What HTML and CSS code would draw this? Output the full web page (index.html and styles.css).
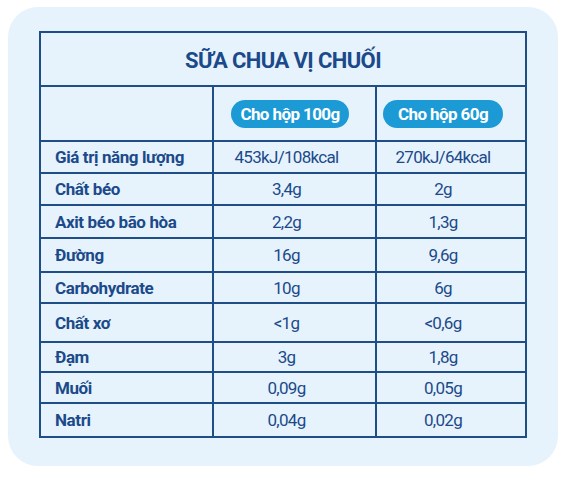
FILE: index.html
```html
<!DOCTYPE html>
<html lang="vi">
<head>
<meta charset="utf-8">
<title>Sữa chua vị chuối</title>
<link rel="stylesheet" href="styles.css">
</head>
<body>
<div class="panel">
  <div class="table">
    <div class="cell title">SỮA CHUA VỊ CHUỐI</div>
    <div class="cell"></div>
    <div class="cell head c2"><span class="pill">Cho hộp 100g</span></div>
    <div class="cell head c3"><span class="pill">Cho hộp 60g</span></div>

    <div class="cell label">Giá trị năng lượng</div>
    <div class="cell val c2">453kJ/108kcal</div>
    <div class="cell val c3">270kJ/64kcal</div>

    <div class="cell label">Chất béo</div>
    <div class="cell val c2">3,4g</div>
    <div class="cell val c3">2g</div>

    <div class="cell label">Axit béo bão hòa</div>
    <div class="cell val c2">2,2g</div>
    <div class="cell val c3">1,3g</div>

    <div class="cell label">Đường</div>
    <div class="cell val c2">16g</div>
    <div class="cell val c3">9,6g</div>

    <div class="cell label">Carbohydrate</div>
    <div class="cell val c2">10g</div>
    <div class="cell val c3">6g</div>

    <div class="cell label">Chất xơ</div>
    <div class="cell val c2">&lt;1g</div>
    <div class="cell val c3">&lt;0,6g</div>

    <div class="cell label">Đạm</div>
    <div class="cell val c2">3g</div>
    <div class="cell val c3">1,8g</div>

    <div class="cell label">Muối</div>
    <div class="cell val c2">0,09g</div>
    <div class="cell val c3">0,05g</div>

    <div class="cell label">Natri</div>
    <div class="cell val c2">0,04g</div>
    <div class="cell val c3">0,02g</div>
  </div>
</div>
</body>
</html>
```
FILE: styles.css
```css
html, body {
  margin: 0;
  padding: 0;
  background: #ffffff;
}

body {
  font-family: Roboto, "Noto Sans", sans-serif;
  color: #1b4a8a;
}

.panel {
  margin: 7px 0 0 8px;
  width: 550px;
  height: 459px;
  box-sizing: border-box;
  padding: 24px 0 0 31px;
  background: #e7f3fc;
  border-radius: 30px;
}

.table {
  display: grid;
  width: 488px;
  box-sizing: border-box;
  grid-template-columns: 171px 161px 148px;
  grid-template-rows: 52px 53px 30px 30px 31px 32px 29px 37px 28px 29px 32px;
  gap: 2px;
  border: 2px solid #1f4e86;
  background: #1f4e86;
}

.cell {
  background: #e7f3fc;
  display: flex;
  align-items: center;
  min-width: 0;
}

.title {
  grid-column: 1 / 4;
  justify-content: center;
  font-size: 22px;
  font-weight: 700;
  letter-spacing: -0.6px;
  padding-top: 2px;
}

.head {
  justify-content: center;
}

.head.c2 {
  padding-right: 9px;
}

.head.c3 {
  padding-right: 16px;
}

.pill {
  display: inline-flex;
  align-items: center;
  justify-content: center;
  height: 28px;
  padding: 0 6px;
  border-radius: 14px;
  background: #1b9ad6;
  color: #ffffff;
  font-size: 17px;
  font-weight: 700;
  letter-spacing: -0.6px;
  box-sizing: border-box;
}

.head.c2 .pill {
  width: 118px;
}

.head.c3 .pill {
  width: 120px;
}

.label {
  padding-left: 14px;
  font-size: 17px;
  font-weight: 700;
  letter-spacing: -0.4px;
}

.val {
  justify-content: center;
  padding-right: 16px;
  font-size: 17px;
  font-weight: 400;
  letter-spacing: -0.7px;
}
```
